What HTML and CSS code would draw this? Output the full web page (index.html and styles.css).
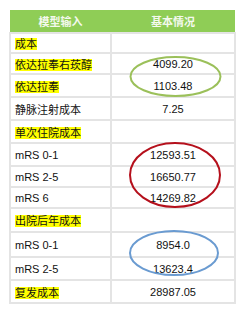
FILE: index.html
```html
<!DOCTYPE html>
<html>
<head>
<meta charset="utf-8">
<link rel="stylesheet" href="styles.css">
</head>
<body>
<div class="wrap">
  <table class="grid">
    <thead>
      <tr><th class="c1">模型输入</th><th class="c2">基本情况</th></tr>
    </thead>
    <tbody>
      <tr class="h20"><td><span class="hl">成本</span></td><td></td></tr>
      <tr class="h21"><td><span class="hl">依达拉奉右莰醇</span></td><td class="v">4099.20</td></tr>
      <tr class="h23"><td><span class="hl">依达拉奉</span></td><td class="v">1103.48</td></tr>
      <tr class="h23"><td>静脉注射成本</td><td class="v">7.25</td></tr>
      <tr class="h23"><td><span class="hl">单次住院成本</span></td><td></td></tr>
      <tr class="h23"><td>mRS 0-1</td><td class="v">12593.51</td></tr>
      <tr class="h21"><td>mRS 2-5</td><td class="v">16650.77</td></tr>
      <tr class="h21"><td>mRS 6</td><td class="v">14269.82</td></tr>
      <tr class="h24"><td><span class="hl">出院后年成本</span></td><td></td></tr>
      <tr class="h25"><td>mRS 0-1</td><td class="v">8954.0</td></tr>
      <tr class="h23"><td>mRS 2-5</td><td class="v">13623.4</td></tr>
      <tr class="h23"><td><span class="hl">复发成本</span></td><td class="v">28987.05</td></tr>
    </tbody>
  </table>
  <svg class="rings" width="246" height="315" viewBox="0 0 246 315">
    <ellipse cx="175.5" cy="76.5" rx="45" ry="19.5" fill="none" stroke="#9bc05a" stroke-width="2"/>
    <ellipse cx="175" cy="175" rx="45" ry="32" fill="none" stroke="#b5101c" stroke-width="2"/>
    <ellipse cx="174" cy="253" rx="44" ry="22" fill="none" stroke="#6a9bd1" stroke-width="2"/>
  </svg>
</div>
</body>
</html>
```
FILE: styles.css
```css
html, body {
  margin: 0;
  padding: 0;
  background: #ffffff;
}
.wrap {
  position: relative;
  width: 246px;
  height: 315px;
  padding: 10px 0 0 9px;
  box-sizing: border-box;
  font-family: "Liberation Sans", "Noto Sans CJK SC", sans-serif;
  font-size: 11px;
  color: #111;
}
.grid {
  border-collapse: collapse;
  width: 227px;
  table-layout: fixed;
}
.grid th {
  background: #8fcd56;
  color: #f4f9ee;
  font-weight: bold;
  height: 22px;
  padding: 0;
  text-align: center;
  border: none;
}
.grid .c1 { width: 101px; }
.grid td {
  padding: 0 0 0 4px;
  border: 2px solid #e4e4e4;
  box-sizing: border-box;
  white-space: nowrap;
}
.grid .h20 td { height: 20px; }
.grid .h21 td { height: 21px; }
.grid .h23 td { height: 23px; }
.grid .h24 td { height: 24px; }
.grid .h25 td { height: 25px; }
.grid td.v {
  text-align: center;
  padding: 0;
}
.hl {
  background: #ffff00;
}
.rings {
  position: absolute;
  left: 0;
  top: 0;
  pointer-events: none;
}
```
